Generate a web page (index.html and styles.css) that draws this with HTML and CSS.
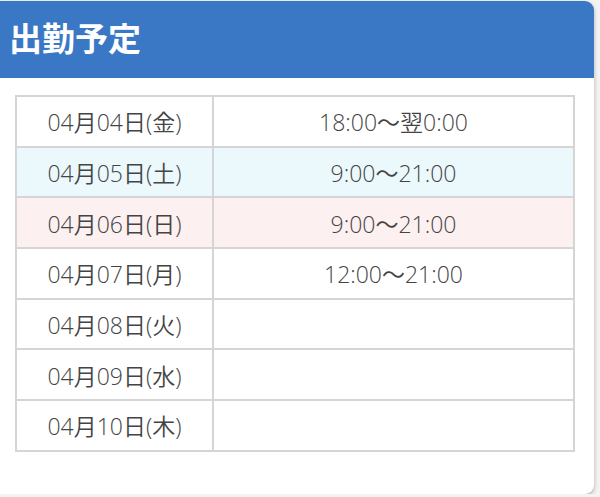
FILE: index.html
```html
<!DOCTYPE html>
<html lang="ja">
<head>
<meta charset="utf-8">
<link rel="stylesheet" href="styles.css">
</head>
<body>
<div class="card">
  <div class="card-header"><h2 class="card-title">出勤予定</h2></div>
  <div class="card-body">
    <table class="schedule">
      <tr><td class="date">04月04日(金)</td><td class="time">18:00〜翌0:00</td></tr>
      <tr class="sat"><td class="date">04月05日(土)</td><td class="time">9:00〜21:00</td></tr>
      <tr class="sun"><td class="date">04月06日(日)</td><td class="time">9:00〜21:00</td></tr>
      <tr><td class="date">04月07日(月)</td><td class="time">12:00〜21:00</td></tr>
      <tr><td class="date">04月08日(火)</td><td class="time"></td></tr>
      <tr><td class="date">04月09日(水)</td><td class="time"></td></tr>
      <tr><td class="date">04月10日(木)</td><td class="time"></td></tr>
    </table>
  </div>
</div>
</body>
</html>
```
FILE: styles.css
```css
html, body {
  margin: 0;
  padding: 0;
  background: #f3f3f3;
  font-family: "Noto Sans CJK JP", "Noto Sans", sans-serif;
}
.card {
  margin: 1px 6px 0 0;
  background: #ffffff;
  border-radius: 0 9px 9px 0;
  box-shadow: 0 2px 4px rgba(0, 0, 0, 0.28);
  overflow: hidden;
}
.card-header {
  background: #3a78c5;
  height: 77px;
  display: flex;
  align-items: center;
  padding: 0 0 5px 9px;
  box-sizing: border-box;
}
.card-title {
  margin: 0;
  color: #ffffff;
  font-size: 33px;
  font-weight: 700;
  line-height: 1;
}
.card-body {
  padding: 17px 19px 42px 15px;
}
.schedule {
  width: 100%;
  border-collapse: collapse;
  border: 2px solid #d5d5d5;
}
.schedule td {
  border: 2px solid #d5d5d5;
  height: 48.7px;
  padding: 0;
  text-align: center;
  color: #444444;
  font-family: "Open Sans", "Noto Sans CJK JP", sans-serif;
  font-size: 23px;
  font-weight: 350;
}
.schedule td.date {
  width: 195px;
}
.schedule tr.sat td {
  background: #ebf8fc;
}
.schedule tr.sun td {
  background: #fcf0f1;
}
```
